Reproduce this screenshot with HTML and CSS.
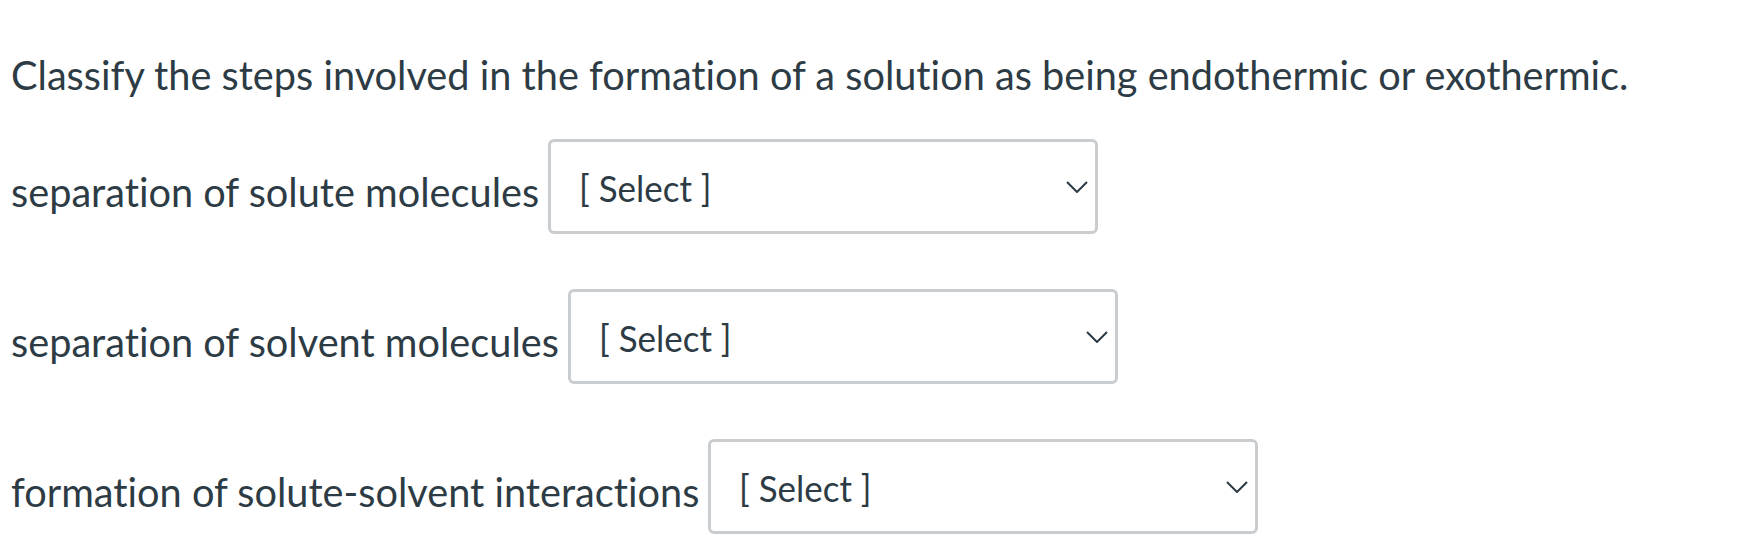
FILE: index.html
```html
<!DOCTYPE html>
<html>
<head>
<meta charset="utf-8">
<link rel="stylesheet" href="styles.css">
</head>
<body>
<div class="page">
  <p class="question">Classify the steps involved in the formation of a solution as being endothermic or exothermic.</p>
  <div class="row">
    <span class="label">separation of solute molecules</span>
    <div class="select"><span class="sel-text">[ Select ]</span><svg class="chev" width="22" height="12" viewBox="0 0 22 12"><path d="M1 1 L11 11 L21 1" fill="none" stroke="#2d3b45" stroke-width="2"/></svg></div>
  </div>
  <div class="row">
    <span class="label">separation of solvent molecules</span>
    <div class="select"><span class="sel-text">[ Select ]</span><svg class="chev" width="22" height="12" viewBox="0 0 22 12"><path d="M1 1 L11 11 L21 1" fill="none" stroke="#2d3b45" stroke-width="2"/></svg></div>
  </div>
  <div class="row">
    <span class="label">formation of solute-solvent interactions</span>
    <div class="select"><span class="sel-text">[ Select ]</span><svg class="chev" width="22" height="12" viewBox="0 0 22 12"><path d="M1 1 L11 11 L21 1" fill="none" stroke="#2d3b45" stroke-width="2"/></svg></div>
  </div>
</div>
</body>
</html>
```
FILE: styles.css
```css
html, body {
  margin: 0;
  padding: 0;
  background: #ffffff;
}
.page {
  padding: 51px 0 0 11px;
  font-family: Lato, "Open Sans", sans-serif;
  color: #2d3b45;
  font-size: 39.7px;
  font-variant-ligatures: none;
}
.question {
  margin: 0 0 40px 0;
  line-height: 48px;
}
.row {
  display: flex;
  align-items: flex-end;
  gap: 9px;
  margin-bottom: 55px;
}
.row:last-child {
  margin-bottom: 0;
}
.label {
  line-height: 48px;
  padding-bottom: 18px;
}
.select {
  box-sizing: border-box;
  width: 550px;
  height: 95px;
  border: 3px solid #c9cdd0;
  border-radius: 6px;
  display: flex;
  align-items: center;
  justify-content: space-between;
  padding: 0 7px 0 28px;
}
.sel-text {
  display: inline-block;
  transform: scaleX(0.945);
  transform-origin: left center;
  font-size: 37px;
  margin-top: 2px;
}
.chev {
  display: block;
}
```
